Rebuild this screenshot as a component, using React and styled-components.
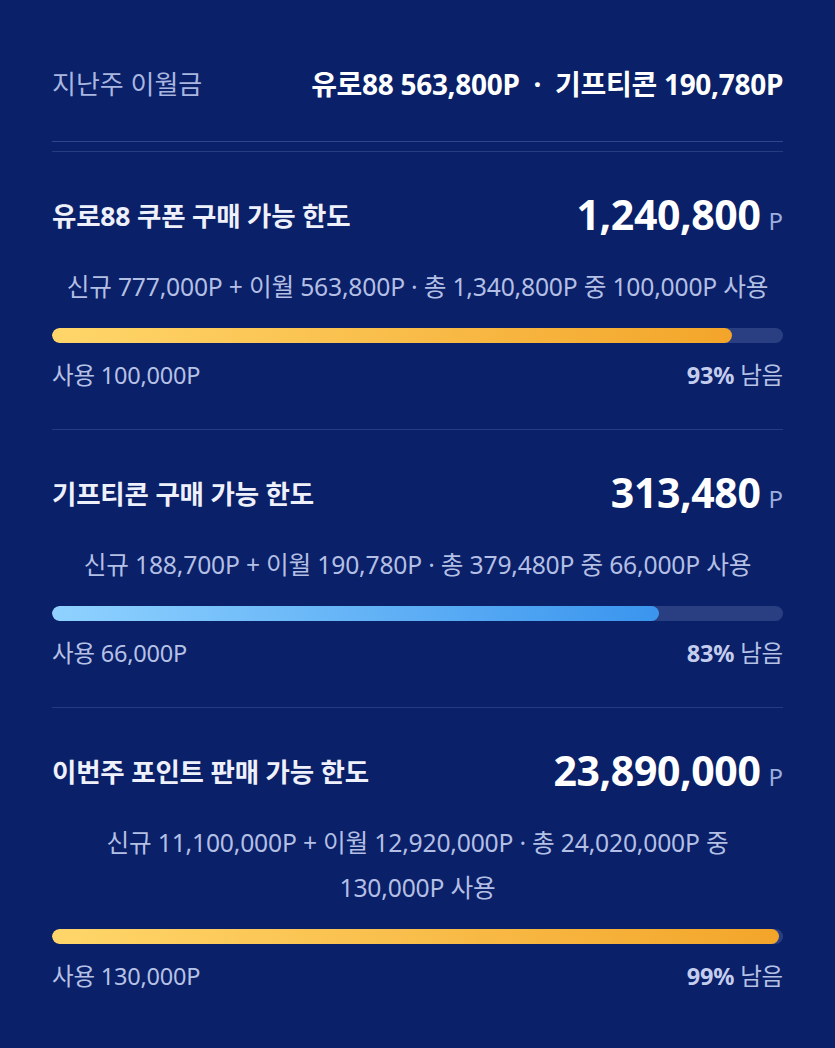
import React from "react";
import styled, { createGlobalStyle } from "styled-components";

const GlobalStyle = createGlobalStyle`
  html, body {
    margin: 0;
    padding: 0;
    background: #0a2068;
  }
  body {
    font-family: "Noto Sans", "Noto Sans CJK KR", sans-serif;
  }
`

const Card = styled.div`
  min-height: 1048px;
  box-sizing: border-box;
  padding: 0 52px;
  background: #0a2068;
  color: #fff;
`

const Header = styled.div`
  display: flex;
  justify-content: space-between;
  align-items: center;
  padding: 66px 0 41px;
  height: 34px;
  border-bottom: 1px solid rgba(140, 160, 220, 0.3);
`

const HeaderLabel = styled.span`
  font-size: 26px;
  color: #a8b6e0;
`

const HeaderValue = styled.span`
  font-size: 28px;
  font-weight: 700;
  color: #fff;
  letter-spacing: -0.3px;
`

const Dot = styled.span`
  margin: 0 14px;
`

const Section = styled.section`
  padding: 38px 0 ${p => (p.last ? 60 : 40)}px;
  border-top: 1px solid rgba(140, 160, 220, 0.22);
  margin-top: ${p => (p.first ? 9 : 0)}px;
`

const TitleRow = styled.div`
  display: flex;
  justify-content: space-between;
  align-items: center;
  height: 48px;
`

const Title = styled.h2`
  margin: 0;
  font-size: 26.5px;
  font-weight: 700;
  color: #eef1fb;
  letter-spacing: -0.2px;
`

const Amount = styled.div`
  display: flex;
  align-items: baseline;
  gap: 8px;
`

const Big = styled.span`
  font-size: 41px;
  font-weight: 700;
  color: #fff;
  letter-spacing: -0.4px;
`

const Unit = styled.span`
  font-size: 24px;
  color: #9eaedc;
`

const Detail = styled.p`
  margin: 26px 0 0;
  font-size: 24.7px;
  line-height: 45px;
  text-align: center;
  color: #b3bfe4;
  letter-spacing: -0.2px;
`

const Track = styled.div`
  margin-top: 19px;
  height: 15px;
  border-radius: 8px;
  background: #2a3f82;
  overflow: hidden;
`

const Fill = styled.div`
  height: 100%;
  border-radius: 8px;
  background: ${p =>
    p.tone === "blue"
      ? "linear-gradient(90deg, #8fd2ff 0%, #3a95ee 100%)"
      : "linear-gradient(90deg, #ffd66a 0%, #f3a52a 100%)"};
`

const Labels = styled.div`
  display: flex;
  justify-content: space-between;
  margin-top: 18px;
  line-height: 28px;
  font-size: 23.5px;
  color: #b6c1e6;
  letter-spacing: -0.2px;
`

const Pct = styled.b`
  font-weight: 700;
  color: #c4cdee;
`

const sections = [
  {
    title: "유로88 쿠폰 구매 가능 한도",
    amount: "1,240,800",
    detail: "신규 777,000P + 이월 563,800P · 총 1,340,800P 중 100,000P 사용",
    used: "100,000P",
    fill: 93,
    pct: 93,
    tone: "gold",
  },
  {
    title: "기프티콘 구매 가능 한도",
    amount: "313,480",
    detail: "신규 188,700P + 이월 190,780P · 총 379,480P 중 66,000P 사용",
    used: "66,000P",
    fill: 83,
    pct: 83,
    tone: "blue",
  },
  {
    title: "이번주 포인트 판매 가능 한도",
    amount: "23,890,000",
    detail: (
      <>
        신규 11,100,000P + 이월 12,920,000P · 총 24,020,000P 중
        <br />
        130,000P 사용
      </>
    ),
    used: "130,000P",
    fill: 99.4,
    pct: 99,
    tone: "gold",
  },
]

function App() {
  return (
    <>
      <GlobalStyle />
      <Card>
        <Header>
          <HeaderLabel>지난주 이월금</HeaderLabel>
          <HeaderValue>
            유로88 563,800P<Dot>·</Dot>기프티콘 190,780P
          </HeaderValue>
        </Header>
        {sections.map((s, i) => (
          <Section key={i} first={i === 0} last={i === sections.length - 1}>
            <TitleRow>
              <Title>{s.title}</Title>
              <Amount>
                <Big>{s.amount}</Big>
                <Unit>P</Unit>
              </Amount>
            </TitleRow>
            <Detail>{s.detail}</Detail>
            <Track>
              <Fill tone={s.tone} style={{ width: `${s.fill}%` }} />
            </Track>
            <Labels>
              <span>사용 {s.used}</span>
              <span>
                <Pct>{s.pct}%</Pct> 남음
              </span>
            </Labels>
          </Section>
        ))}
      </Card>
    </>
  )
}

export default App
